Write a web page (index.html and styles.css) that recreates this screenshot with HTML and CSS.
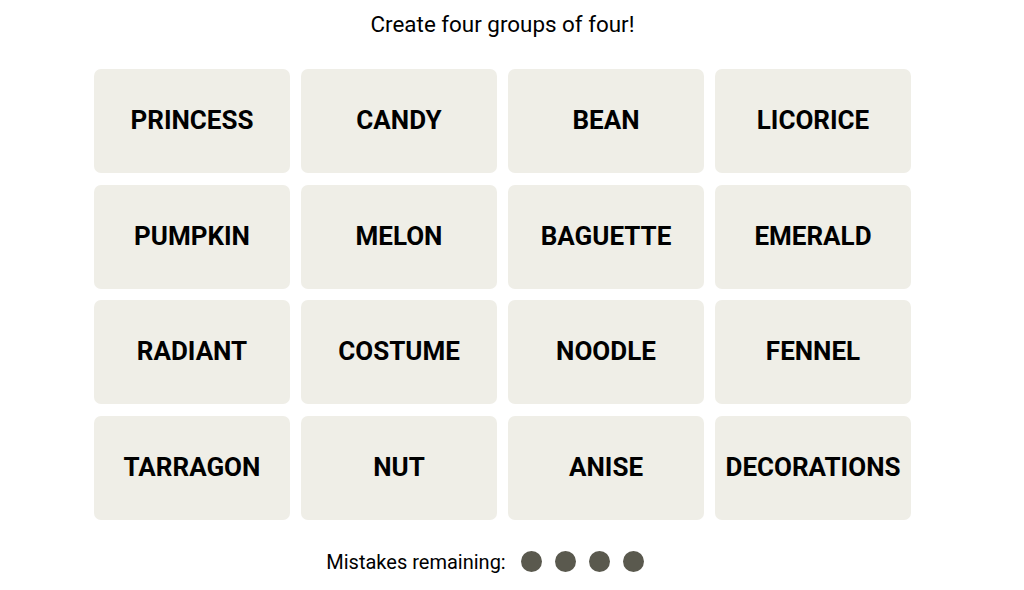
FILE: index.html
```html
<!DOCTYPE html>
<html lang="en">
<head>
    <meta charset="UTF-8">
    <meta name="viewport" content="width=device-width, initial-scale=1.0">
    <title>Connections</title>
    <link rel="stylesheet" href="styles.css">
</head>
<body>

    <div class="game">

        <p class="prompt">Create four groups of four!</p>

        <div class="board">
            <button class="tile">PRINCESS</button>
            <button class="tile">CANDY</button>
            <button class="tile">BEAN</button>
            <button class="tile">LICORICE</button>
            <button class="tile">PUMPKIN</button>
            <button class="tile">MELON</button>
            <button class="tile">BAGUETTE</button>
            <button class="tile">EMERALD</button>
            <button class="tile">RADIANT</button>
            <button class="tile">COSTUME</button>
            <button class="tile">NOODLE</button>
            <button class="tile">FENNEL</button>
            <button class="tile">TARRAGON</button>
            <button class="tile">NUT</button>
            <button class="tile">ANISE</button>
            <button class="tile">DECORATIONS</button>
        </div>

        <div class="mistakes">
            <span>Mistakes remaining:</span>
            <div class="dots">
                <span class="dot"></span>
                <span class="dot"></span>
                <span class="dot"></span>
                <span class="dot"></span>
            </div>
        </div>

    </div>

</body>
</html>
```

FILE: styles.css
```css
:root{
    --font-primary: Roboto, "Liberation Sans", sans-serif;
    --tile-bg: #efeee7;
    --dot-color: #5a594e;
}

body{
    margin: 0;
    font-family: var(--font-primary);
    color: #000;
    background: #fff;
}

.game{
    width: 1005px;
    display: flex;
    flex-direction: column;
    align-items: center;
}

.prompt{
    margin: 0;
    padding-top: 11px;
    font-size: 22.4px;
    line-height: 26px;
}

.board{
    margin-top: 32px;
    display: grid;
    grid-template-columns: repeat(4, 196px);
    grid-auto-rows: 104px;
    column-gap: 11px;
    row-gap: 11.5px;
}

.tile{
    border: none;
    border-radius: 7px;
    background-color: var(--tile-bg);
    font-family: var(--font-primary);
    font-size: 26px;
    font-weight: 700;
    color: #000;
    padding: 0 0 2px;
    cursor: pointer;
}

.mistakes{
    margin-top: 30px;
    padding-right: 35px;
    display: flex;
    align-items: center;
    gap: 15px;
    font-size: 20px;
}

.dots{
    display: flex;
    gap: 13px;
}

.dot{
    width: 21px;
    height: 21px;
    border-radius: 50%;
    background-color: var(--dot-color);
}
```
